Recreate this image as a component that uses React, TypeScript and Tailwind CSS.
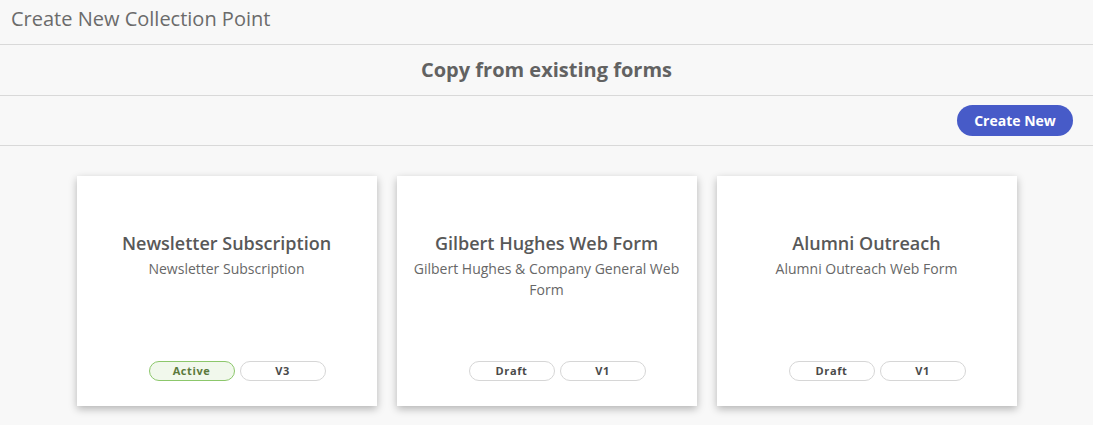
import React from "react";

type Card = { title: string; sub: string; status: string; version: string; active?: boolean };

const cards: Card[] = [
  { title: "Newsletter Subscription", sub: "Newsletter Subscription", status: "Active", version: "V3", active: true },
  { title: "Gilbert Hughes Web Form", sub: "Gilbert Hughes & Company General Web Form", status: "Draft", version: "V1" },
  { title: "Alumni Outreach", sub: "Alumni Outreach Web Form", status: "Draft", version: "V1" },
];

export default function App() {
  return (
    <div
      className="w-[1093px] h-[425px] bg-[#f8f8f8] overflow-hidden"
      style={{ fontFamily: '"Open Sans", "Noto Sans", sans-serif' }}
    >
      <div className="h-[45px] border-b border-[#d9d9d9] flex items-center pl-[11px] pb-[6px]">
        <span className="text-[20px] text-[#6b6b6b] leading-[26px]">Create New Collection Point</span>
      </div>
      <div className="h-[51px] border-b border-[#d9d9d9] flex items-center justify-center pb-[1px]">
        <span className="text-[20px] font-bold text-[#626262] leading-[26px]">Copy from existing forms</span>
      </div>
      <div className="h-[50px] border-b border-[#d9d9d9] flex items-center justify-end pr-[20px]">
        <button className="h-[31px] w-[116px] rounded-full bg-[#475bc8] text-white text-[14px] font-bold leading-none">
          Create New
        </button>
      </div>
      <div className="flex justify-center gap-[20px] pt-[30px]">
        {cards.map((c) => (
          <div
            key={c.title}
            className="w-[300px] h-[230px] bg-white shadow-[0_3px_8px_rgba(0,0,0,0.28)] flex flex-col items-center pt-[55px] pb-[25px] px-[14px]"
          >
            <div className="text-[18px] font-semibold text-[#585858] leading-[24px] text-center">{c.title}</div>
            <div className="mt-[3px] text-[14px] text-[#676767] leading-[21px] text-center">{c.sub}</div>
            <div className="mt-auto flex gap-[5px] pl-[21px]">
              <span
                className={
                  c.active
                    ? "w-[86px] h-[20px] rounded-full border border-[#8cc76b] bg-[#f1f8ec] text-[#5b7a3c] text-[11px] font-bold tracking-[0.6px] flex items-center justify-center"
                    : "w-[86px] h-[20px] rounded-full border border-[#d6d6d6] bg-white text-[#4a4a4a] text-[11px] font-bold tracking-[0.6px] flex items-center justify-center"
                }
              >
                {c.status}
              </span>
              <span className="w-[86px] h-[20px] rounded-full border border-[#d6d6d6] bg-white text-[#4a4a4a] text-[11px] font-bold tracking-[0.6px] flex items-center justify-center">
                {c.version}
              </span>
            </div>
          </div>
        ))}
      </div>
    </div>
  );
}
